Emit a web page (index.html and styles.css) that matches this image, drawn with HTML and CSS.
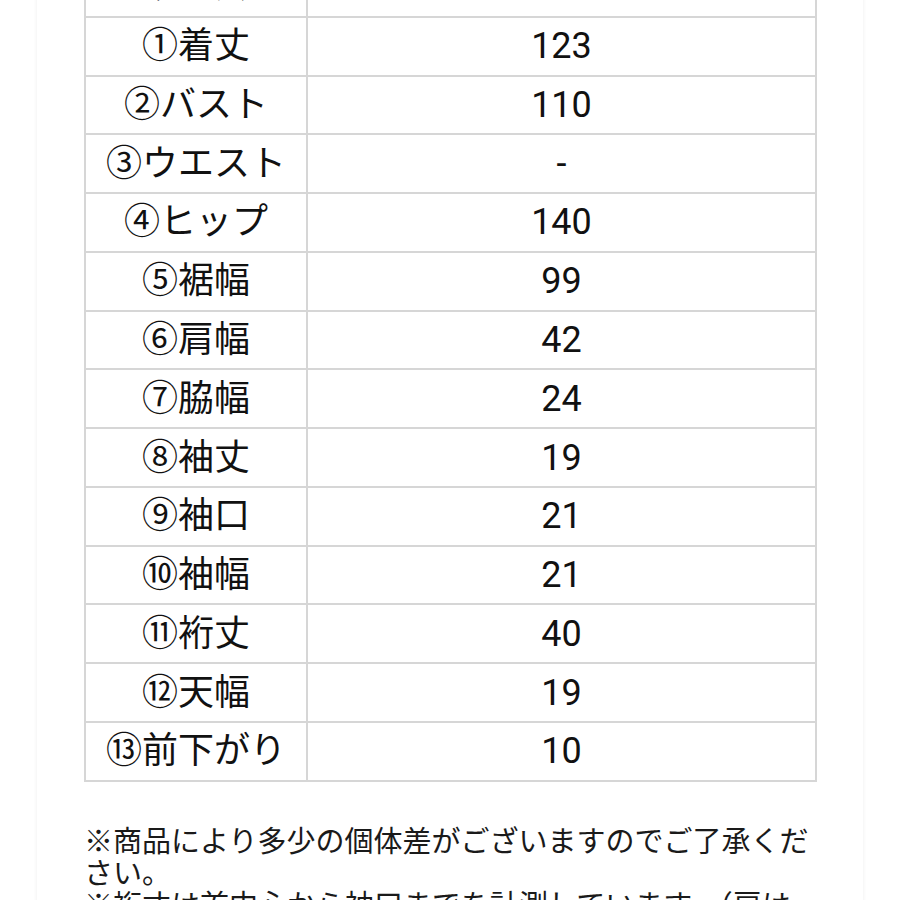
FILE: index.html
```html
<!DOCTYPE html>
<html lang="ja">
<head>
<meta charset="utf-8">
<title>サイズ表</title>
<link rel="stylesheet" href="styles.css">
</head>
<body>
<div class="card">
  <table class="size-table">
    <tbody>
      <tr><td class="label">サイズ</td><td class="value">F</td></tr>
      <tr><td class="label">①着丈</td><td class="value">123</td></tr>
      <tr><td class="label">②バスト</td><td class="value">110</td></tr>
      <tr><td class="label">③ウエスト</td><td class="value">-</td></tr>
      <tr><td class="label">④ヒップ</td><td class="value">140</td></tr>
      <tr><td class="label">⑤裾幅</td><td class="value">99</td></tr>
      <tr><td class="label">⑥肩幅</td><td class="value">42</td></tr>
      <tr><td class="label">⑦脇幅</td><td class="value">24</td></tr>
      <tr><td class="label">⑧袖丈</td><td class="value">19</td></tr>
      <tr><td class="label">⑨袖口</td><td class="value">21</td></tr>
      <tr><td class="label">⑩袖幅</td><td class="value">21</td></tr>
      <tr><td class="label">⑪裄丈</td><td class="value">40</td></tr>
      <tr><td class="label">⑫天幅</td><td class="value">19</td></tr>
      <tr><td class="label">⑬前下がり</td><td class="value">10</td></tr>
    </tbody>
  </table>
  <div class="notes">
    <p class="note">※商品により多少の個体差がございますのでご了承ください。</p>
    <p class="note">※裄丈は首中心から袖口までを計測しています。（肩は含みません）</p>
  </div>
</div>
</body>
</html>
```

FILE: styles.css
```css
html, body {
  margin: 0;
  padding: 0;
  background: #ffffff;
}

body {
  font-family: Roboto, "Noto Sans CJK JP", sans-serif;
  color: #111111;
  overflow: hidden;
}

.card {
  margin: -43px 37px 0 37px;
  padding: 0 46px 40px 47px;
  background: #ffffff;
  box-shadow: 0 0 4px rgba(0, 0, 0, 0.07);
  min-height: 1100px;
}

.size-table {
  width: 733px;
  border-collapse: collapse;
  table-layout: fixed;
}

.size-table tr {
  height: 58.77px;
}

.size-table td {
  border: 2px solid #d6d6d6;
  padding: 0;
  text-align: center;
  vertical-align: middle;
  font-size: 36px;
  line-height: 1;
  white-space: nowrap;
}

.size-table .label {
  width: 220px;
}

.notes {
  margin-top: 41px;
}

.note {
  margin: 0;
  font-family: "Noto Sans CJK JP", sans-serif;
  font-size: 29px;
  line-height: 32px;
  color: #1a1a1a;
}
```
